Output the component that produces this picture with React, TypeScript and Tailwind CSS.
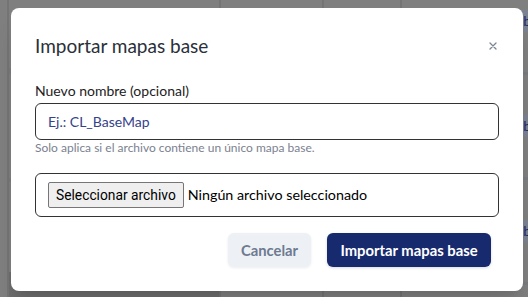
export default function App() {
  const rowsRight = [0, 1, 2];
  return (
    <div
      className="relative w-[528px] h-[297px] overflow-hidden bg-[#7f7f7f]"
      style={{ fontFamily: "Lato, 'Noto Sans', sans-serif" }}
    >
      {/* background page under overlay */}
      <div className="flex h-full">
        <div className="w-[9px] h-full border-r-2 border-[#747474]" />
        <div className="w-[212px] h-full flex flex-col border-r-2 border-[#747474]">
          <div className="h-[68px]" />
          <div className="h-[6px] bg-[#777a7e]" />
          <div className="h-[104px]" />
          <div className="h-[4px] bg-[#777a7e]" />
          <div className="h-[90px]" />
          <div className="flex-1 bg-[#6d6d6d]" />
        </div>
        <div className="w-[103px] h-full border-r-2 border-[#747474]" />
        <div className="w-[78px] h-full border-r-2 border-[#747474]" />
        <div className="flex-1 h-full flex flex-col">
          {rowsRight.map((i) => (
            <div key={i} className="flex flex-col">
              <div className="h-[10px]" />
              <div className="h-[22px] bg-[#7a8190] flex items-center justify-end text-[14px] text-[#1e2b6a] leading-none">
                <span className="translate-x-[3px]">b</span>
              </div>
              <div className="h-[40px]" />
              <div className="h-[3px] bg-[#777a7e]" />
              <div className="h-[30px]" />
            </div>
          ))}
        </div>
      </div>

      {/* dialog */}
      <div className="absolute left-[11px] top-[8px] w-[512px] h-[283px] bg-white rounded-[8px] px-6 pt-6 pb-6 flex flex-col shadow-xl">
        <div className="h-[28px] flex items-center justify-between">
          <h2 className="text-[19px] leading-[28px] text-[#2a2f3a] font-normal">Importar mapas base</h2>
          <span className="w-[10px] h-[10px] mr-[1px] flex items-center justify-center">
            <svg width="8" height="8" viewBox="0 0 8 8">
              <path d="M1 1L7 7M7 1L1 7" stroke="#7b8494" strokeWidth="1.3" strokeLinecap="round" />
            </svg>
          </span>
        </div>
        <label className="mt-[21px] text-[14px] leading-[20px] text-[#222]">Nuevo nombre (opcional)</label>
        <div className="mt-[2px] h-[37px] border border-[#333] rounded-[6px] flex items-center px-[12px]">
          <span className="text-[14px] text-[#34428a]">Ej.: CL_BaseMap</span>
        </div>
        <p className="mt-[1px] text-[12px] leading-[14px] text-[#7b8190]">
          Solo aplica si el archivo contiene un único mapa base.
        </p>
        <div className="mt-[18px] h-[44px] border border-[#333] rounded-[6px] flex items-center px-[12px]">
          <span
            className="h-[26px] px-[7px] flex items-center bg-[#efefef] border border-[#767676] rounded-[2px] text-[13.8px] text-black"
            style={{ fontFamily: "Roboto, 'Noto Sans', sans-serif" }}
          >
            Seleccionar archivo
          </span>
          <span className="ml-[4px] text-[14.3px] text-black">Ningún archivo seleccionado</span>
        </div>
        <div className="mt-[16px] flex justify-end gap-4 mr-2">
          <button className="h-[34px] w-[83px] rounded-[6px] bg-[#edf1f6] text-[14.8px] font-bold text-[#6d7a90] shadow-[0_1px_3px_rgba(0,0,0,0.08)]">
            Cancelar
          </button>
          <button className="h-[34px] w-[164px] rounded-[6px] bg-[#172a6e] text-[14.8px] font-bold text-white shadow-[0_1px_3px_rgba(0,0,0,0.15)]">
            Importar mapas base
          </button>
        </div>
      </div>
    </div>
  );
}
